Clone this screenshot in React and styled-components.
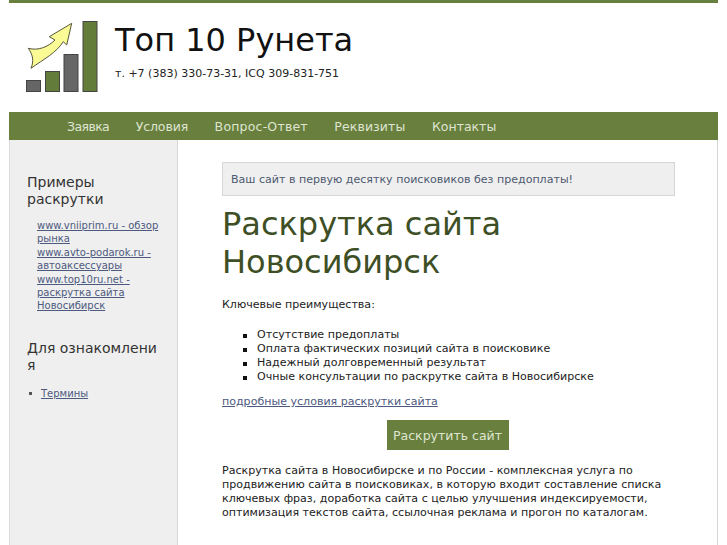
import React from 'react';
import styled, { createGlobalStyle } from 'styled-components';

const GlobalStyle = createGlobalStyle`
  html, body {
    margin: 0;
    padding: 0;
    background: #ffffff;
    height: 545px;
    overflow: hidden;
  }
  body {
    font-family: "DejaVu Sans", sans-serif;
    font-size: 11px;
    color: #111111;
  }
`;

const Page = styled.div`
  width: 709px;
  margin-left: 9px;
  border-top: 3px solid #687f3e;
`;

const Header = styled.header`
  height: 109px;
  box-sizing: border-box;
  display: flex;
  padding: 18px 0 0 17px;
`;

const Logo = styled.svg`
  width: 72px;
  height: 71px;
  flex: none;
`;

const Brand = styled.div`
  margin-left: 17px;
`;

const SiteTitle = styled.div`
  font-size: 32px;
  line-height: 38px;
  color: #111111;
`;

const Phone = styled.div`
  margin-top: 8px;
  font-size: 11px;
  line-height: 14px;
  color: #222222;
`;

const Nav = styled.nav`
  height: 28px;
  background: #687f3e;
  display: flex;
  align-items: center;
  gap: 26.5px;
  padding-left: 58px;
`;

const NavLink = styled.a`
  font-size: 12.5px;
  letter-spacing: ${(p) => p.$track || 0}px;
  color: #dfe5d0;
`;

const Body = styled.div`
  display: flex;
  height: 405px;
  border-right: 1px solid #d6d6d6;
`;

const Sidebar = styled.aside`
  width: 169px;
  flex: none;
  box-sizing: border-box;
  background: #efefef;
  border-left: 1px solid #dcdcdc;
  border-right: 1px solid #d6d6d6;
  padding: 34px 0 0 17px;
`;

const SideTitle = styled.h3`
  margin: 0;
  font-size: 14px;
  font-weight: normal;
  line-height: 17px;
  color: #333333;
  width: 137px;
  word-break: break-all;
`;

const SideTitleText = styled.span`
  word-break: normal;
`;

const SideLinks = styled.div`
  margin: 11px 0 27px 10px;
  width: 126px;
  font-size: 10px;
  line-height: 13.4px;
`;

const SideLink = styled.a`
  color: #4d5a80;
  text-decoration: underline;
`;

const SideList = styled.ul`
  margin: 13px 0 0;
  padding: 0;
  list-style: none;
  font-size: 10px;
  line-height: 13px;
`;

const SideItem = styled.li`
  display: flex;
  align-items: center;
  gap: 9px;
  padding-left: 2px;
`;

const Dot = styled.span`
  width: 3px;
  height: 3px;
  background: #555555;
`;

const Main = styled.main`
  flex: 1;
  padding: 22px 42px 0 44px;
`;

const Notice = styled.div`
  height: 32px;
  padding-left: 8px;
  background: #efefef;
  border: 1px solid #d6d6d6;
  display: flex;
  align-items: center;
  font-size: 11.05px;
  color: #4d5a70;
`;

const Heading = styled.h1`
  margin: 9px 0 0;
  font-size: 32px;
  font-weight: normal;
  line-height: 38px;
  color: #3e4f25;
`;

const Text = styled.p`
  margin: ${(p) => p.$top}px 0 0;
  font-size: 11.05px;
  line-height: 14px;
  color: #222222;
`;

const Bullets = styled.ul`
  margin: 16px 0 0;
  padding: 0 0 0 35px;
  list-style: none;
  font-size: 11.05px;
  line-height: 14px;
  color: #222222;
`;

const Bullet = styled.li`
  position: relative;
  &::before {
    content: "";
    position: absolute;
    left: -14px;
    top: 6px;
    width: 4px;
    height: 4px;
    background: #111111;
  }
`;

const MoreLink = styled.a`
  display: block;
  margin-top: 11px;
  font-size: 11.05px;
  line-height: 14px;
  color: #4d5a80;
  text-decoration: underline;
`;

const ButtonRow = styled.div`
  display: flex;
  justify-content: center;
  margin-top: 11px;
  padding-right: 2px;
`;

const Button = styled.a`
  width: 122px;
  height: 30px;
  background: #687f3e;
  color: #dfe5d0;
  font-size: 12.5px;
  display: flex;
  align-items: center;
  justify-content: center;
`;

const navItems = [
  { label: 'Заявка', track: -0.6 },
  { label: 'Условия', track: -0.1 },
  { label: 'Вопрос-Ответ', track: 0.2 },
  { label: 'Реквизиты', track: 0.1 },
  { label: 'Контакты' },
];

const sideLinks = [
  'www.vniiprim.ru - обзор рынка',
  'www.avto-podarok.ru - автоаксессуары',
  'www.top10ru.net - раскрутка сайта Новосибирск',
];

const bullets = [
  'Отсутствие предоплаты',
  'Оплата фактических позиций сайта в поисковике',
  'Надежный долговременный результат',
  'Очные консультации по раскрутке сайта в Новосибирске',
];

export default function App() {
  return (
    <Page>
      <GlobalStyle />
      <Header>
        <Logo viewBox="0 0 72 71">
          <g stroke="#444" strokeWidth="1">
            <rect x="0.5" y="59.5" width="14" height="11" fill="#666" />
            <rect x="19.5" y="50.5" width="14" height="20" fill="#647c3a" />
            <rect x="38" y="33.5" width="14" height="37" fill="#666" />
            <rect x="57" y="0.5" width="14" height="70" fill="#647c3a" />
          </g>
          <path
            d="M2.3 27.3 C12 30 22 26 29 19 L23.3 15.7 L45.7 2.3 L40.7 24 L37.3 20.7 C30 32 18 38 5 47.3 C8 40 7 34 2.3 27.3 Z"
            fill="#fbfb96"
            stroke="#55553a"
            strokeWidth="1"
            strokeLinejoin="round"
          />
        </Logo>
        <Brand>
          <SiteTitle>Топ 10 Рунета</SiteTitle>
          <Phone>т. +7 (383) 330-73-31, ICQ 309-831-751</Phone>
        </Brand>
      </Header>
      <Nav>
        {navItems.map((item) => (
          <NavLink key={item.label} $track={item.track}>
            {item.label}
          </NavLink>
        ))}
      </Nav>
      <Body>
        <Sidebar>
          <SideTitle>
            <SideTitleText>Примеры раскрутки</SideTitleText>
          </SideTitle>
          <SideLinks>
            {sideLinks.map((link) => (
              <div key={link}>
                <SideLink>{link}</SideLink>
              </div>
            ))}
          </SideLinks>
          <SideTitle>Для ознакомления</SideTitle>
          <SideList>
            <SideItem>
              <Dot />
              <SideLink>Термины</SideLink>
            </SideItem>
          </SideList>
        </Sidebar>
        <Main>
          <Notice>Ваш сайт в первую десятку поисковиков без предоплаты!</Notice>
          <Heading>Раскрутка сайта Новосибирск</Heading>
          <Text $top={17}>Ключевые преимущества:</Text>
          <Bullets>
            {bullets.map((item) => (
              <Bullet key={item}>{item}</Bullet>
            ))}
          </Bullets>
          <MoreLink>подробные условия раскрутки сайта</MoreLink>
          <ButtonRow>
            <Button>Раскрутить сайт</Button>
          </ButtonRow>
          <Text $top={14}>
            Раскрутка сайта в Новосибирске и по России - комплексная услуга по
            продвижению сайта в поисковиках, в которую входит составление списка
            ключевых фраз, доработка сайта с целью улучшения индексируемости,
            оптимизация текстов сайта, ссылочная реклама и прогон по каталогам.
          </Text>
        </Main>
      </Body>
    </Page>
  );
}
